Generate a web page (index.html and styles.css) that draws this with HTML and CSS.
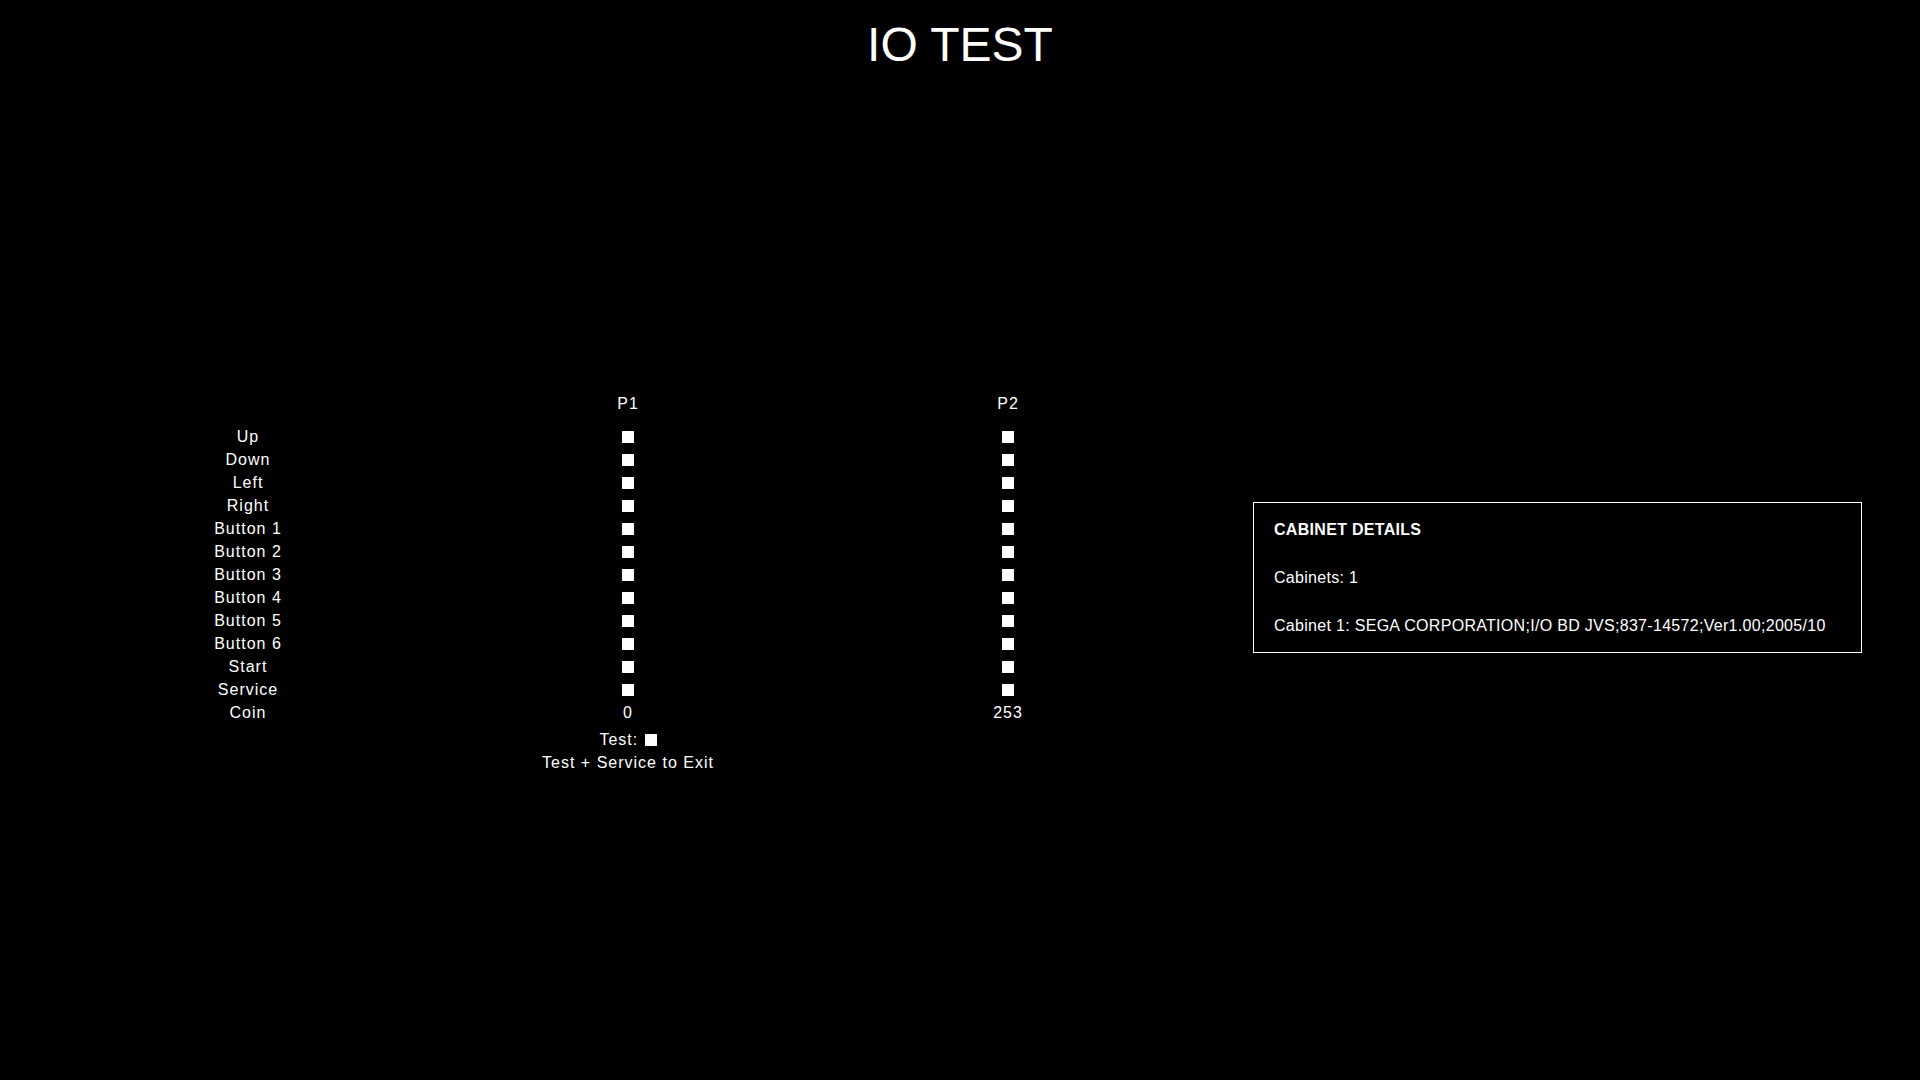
FILE: index.html
```html
<!DOCTYPE html>
<html>
<head>
<meta charset="utf-8">
<title>IO TEST</title>
<link rel="stylesheet" href="styles.css">
</head>
<body>
<h1 class="title">IO TEST</h1>
<div class="main">
  <div class="io">
    <div class="row head"><span></span><span>P1</span><span>P2</span></div>
    <div class="row"><span>Up</span><span><i class="box"></i></span><span><i class="box"></i></span></div>
    <div class="row"><span>Down</span><span><i class="box"></i></span><span><i class="box"></i></span></div>
    <div class="row"><span>Left</span><span><i class="box"></i></span><span><i class="box"></i></span></div>
    <div class="row"><span>Right</span><span><i class="box"></i></span><span><i class="box"></i></span></div>
    <div class="row"><span>Button 1</span><span><i class="box"></i></span><span><i class="box"></i></span></div>
    <div class="row"><span>Button 2</span><span><i class="box"></i></span><span><i class="box"></i></span></div>
    <div class="row"><span>Button 3</span><span><i class="box"></i></span><span><i class="box"></i></span></div>
    <div class="row"><span>Button 4</span><span><i class="box"></i></span><span><i class="box"></i></span></div>
    <div class="row"><span>Button 5</span><span><i class="box"></i></span><span><i class="box"></i></span></div>
    <div class="row"><span>Button 6</span><span><i class="box"></i></span><span><i class="box"></i></span></div>
    <div class="row"><span>Start</span><span><i class="box"></i></span><span><i class="box"></i></span></div>
    <div class="row"><span>Service</span><span><i class="box"></i></span><span><i class="box"></i></span></div>
    <div class="row"><span>Coin</span><span>0</span><span>253</span></div>
    <div class="row foot test"><span></span><span>Test: <i class="box"></i></span><span></span></div>
    <div class="row foot"><span></span><span>Test + Service to Exit</span><span></span></div>
  </div>
  <div class="cabinet">
    <p class="cab-title">CABINET DETAILS</p>
    <p class="cab-line">Cabinets: 1</p>
    <p class="cab-line">Cabinet 1: SEGA CORPORATION;I/O BD JVS;837-14572;Ver1.00;2005/10</p>
  </div>
</div>
</body>
</html>
```
FILE: styles.css
```css
html, body {
  margin: 0;
  padding: 0;
  background: #000;
  color: #fff;
  width: 1920px;
  height: 1080px;
  overflow: hidden;
  font-family: "Liberation Sans", Arial, sans-serif;
}

.title {
  margin: 0;
  font-size: 48px;
  font-weight: normal;
  line-height: 90px;
  text-align: center;
  letter-spacing: 0;
}

.main {
  display: flex;
  align-items: flex-start;
  padding: 302px 58px 0 58px;
  gap: 55px;
}

.io {
  width: 1140px;
  display: flex;
  flex-direction: column;
  font-size: 16px;
  line-height: 23px;
  letter-spacing: 1px;
}

.row {
  display: grid;
  grid-template-columns: 380px 380px 380px;
  height: 23px;
}

.row > span {
  display: flex;
  align-items: center;
  justify-content: center;
  white-space: pre;
}

.row.head {
  margin-bottom: 10px;
}

.row.test {
  margin-top: 4px;
}

.box {
  display: inline-block;
  width: 12px;
  height: 12px;
  background: #fff;
}

.test .box {
  margin-left: 1px;
}

.cabinet {
  box-sizing: border-box;
  width: 610px;
  margin-top: 110px;
  border: 1px solid #fff;
  padding: 15px 20px;
  font-size: 16px;
  line-height: 23px;
  letter-spacing: 0.3px;
}

.cabinet p {
  margin: 0;
}

.cab-title {
  font-weight: bold;
}

.cabinet .cab-line {
  margin-top: 25px;
}
```
